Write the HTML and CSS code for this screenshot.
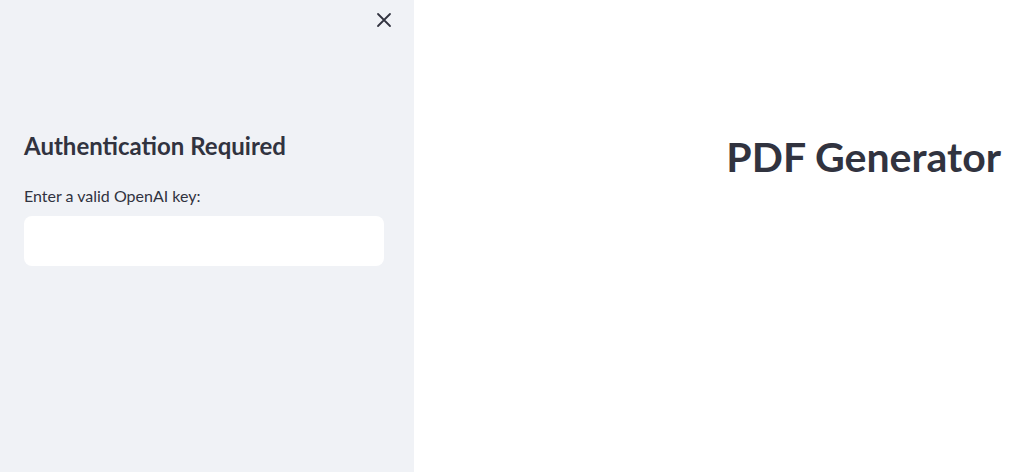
FILE: index.html
```html
<!DOCTYPE html>
<html lang="en">
<head>
    <meta charset="UTF-8">
    <title>PDF Generator</title>
    <link rel="stylesheet" href="styles.css">
</head>
<body>
    <div class="app">
        <aside class="sidebar">
            <div class="sidebar-top">
                <button class="close-btn" aria-label="Close sidebar">
                    <svg width="16" height="16" viewBox="0 0 16 16">
                        <path d="M2 2 L14 14 M14 2 L2 14" stroke="#31333f" stroke-width="1.8" stroke-linecap="round"/>
                    </svg>
                </button>
            </div>
            <h3 class="side-title">Authentication Required</h3>
            <label class="field-label" for="apiKey">Enter a valid OpenAI key:</label>
            <input class="field-input" id="apiKey" type="password">
        </aside>
        <main class="main">
            <h1 class="page-title">PDF Generator</h1>
        </main>
    </div>
</body>
</html>
```

FILE: styles.css
```css
* {
    margin: 0;
    padding: 0;
    box-sizing: border-box;
}

body {
    font-family: 'Lato', 'Noto Sans', sans-serif;
    color: #31333f;
    background: white;
}

.app {
    display: flex;
    height: 472px;
}

.sidebar {
    width: 414px;
    background: #f0f2f6;
    padding: 0 30px 0 24px;
    display: flex;
    flex-direction: column;
}

.sidebar-top {
    display: flex;
    justify-content: flex-end;
    padding-top: 12px;
    margin-right: -8px;
    height: 128px;
}

.close-btn {
    background: none;
    border: none;
    width: 16px;
    height: 16px;
    cursor: pointer;
}

.side-title {
    font-size: 24px;
    font-weight: 700;
    line-height: 36px;
    margin-bottom: 21px;
}

.field-label {
    font-size: 16px;
    line-height: 22px;
    margin-bottom: 9px;
}

.field-input {
    width: 360px;
    height: 50px;
    border: none;
    border-radius: 8px;
    background: white;
    outline: none;
}

.main {
    flex: 1;
    padding: 129px 29px 0 0;
}

.page-title {
    text-align: right;
    font-size: 41px;
    font-weight: 700;
    line-height: 56px;
}
```
